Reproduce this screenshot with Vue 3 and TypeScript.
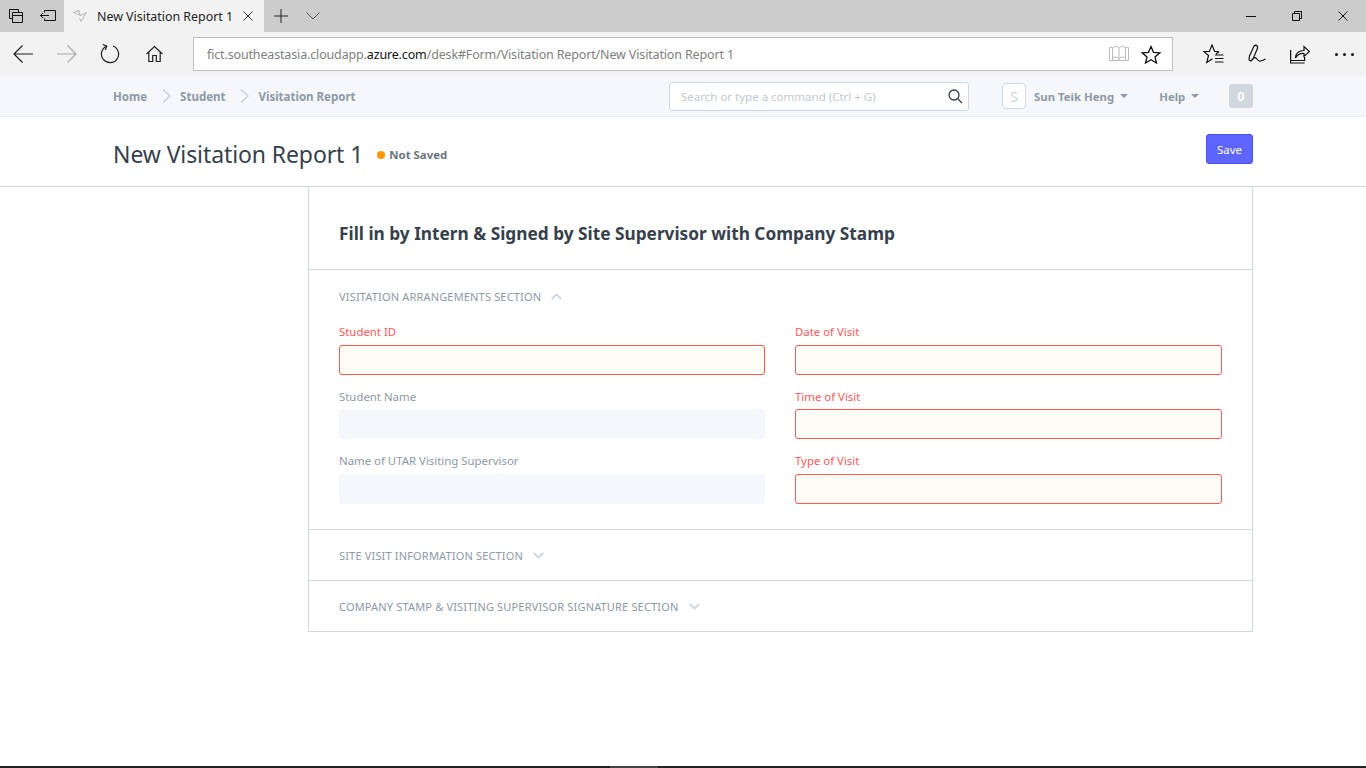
<script setup lang="ts">
const crumbs = ['Home', 'Student', 'Visitation Report']

const leftFields = [
  { label: 'Student ID', required: true },
  { label: 'Student Name', required: false },
  { label: 'Name of UTAR Visiting Supervisor', required: false },
]
const rightFields = [
  { label: 'Date of Visit', required: true },
  { label: 'Time of Visit', required: true },
  { label: 'Type of Visit', required: true },
]
</script>

<template>
  <div class="window">
    <div class="tabstrip">
      <div class="strip-btn">
        <svg width="16" height="16" viewBox="0 0 16 16" fill="none" stroke="#111"><path d="M1.500 4.500v-3h9v3M1.500 1.500v9h3M4.500 4.500h10v10h-10zM4.500 7.500h10"/></svg>
      </div>
      <div class="strip-btn">
        <svg width="16" height="16" viewBox="0 0 16 16" fill="none" stroke="#111"><path d="M4.500 4.500v-2h11v10h-11v-2M0 7.500h9M3 5l-2.500 2.500L3 10"/></svg>
      </div>
      <div class="tab">
        <svg class="tab-icon" width="14" height="14" viewBox="0 0 14 14" fill="none" stroke="#b5b5b5"><path d="M.5 3.500 5 1.500l2.500 5zM7.500 6.500l6-3-5.500 9-1.500-3.500M5 1.500l2 1"/></svg>
        <span class="tab-title">New Visitation Report 1</span>
        <svg width="10" height="10" viewBox="0 0 10 10" fill="none" stroke="#333"><path d="M.5.5l9 9M9.500.5l-9 9"/></svg>
      </div>
      <div class="strip-plus">
        <svg width="14" height="14" viewBox="0 0 14 14" fill="none" stroke="#222"><path d="M7 0v14M0 7h14"/></svg>
      </div>
      <div class="strip-down">
        <svg width="14" height="8" viewBox="0 0 14 8" fill="none" stroke="#555"><path d="M.5.5 7 7l6.500-6.500"/></svg>
      </div>
      <div class="win-controls">
        <svg width="10" height="10" viewBox="0 0 10 10" fill="none" stroke="#111"><path d="M0 5.500h10"/></svg>
        <svg width="10" height="10" viewBox="0 0 10 10" fill="none" stroke="#111"><path d="M2.500 2v-1.500h7v7h-2M.5 2.500h7v7h-7z"/></svg>
        <svg width="10" height="10" viewBox="0 0 10 10" fill="none" stroke="#111"><path d="M.5.5l9 9M9.500.5l-9 9"/></svg>
      </div>
    </div>

    <div class="toolbar">
      <div class="nav-btns">
        <svg width="20" height="18" viewBox="0 0 20 18" fill="none" stroke="#222" stroke-width="1.200"><path d="M20 9H1M9.500.5 1 9l8.500 8.500"/></svg>
        <svg class="muted" width="20" height="18" viewBox="0 0 20 18" fill="none" stroke="#aaa" stroke-width="1.200"><path d="M0 9h19M10.500.5 19 9l-8.500 8.500"/></svg>
        <svg class="reload" width="20" height="20" viewBox="0 0 20 20" fill="none" stroke="#222" stroke-width="1.200"><path d="M6.500 2.200A8.600 8.600 0 1 0 13 2"/><path d="M2.800.5 6.700 2 5.400 6"/></svg>
        <svg class="home" width="17" height="18" viewBox="0 0 17 18" fill="none" stroke="#222" stroke-width="1.200"><path d="M.5 9 8.500 1.500 16.500 9M2.800 7.200V16.500h3.900V10.500h3.600v6h3.900V7.200"/></svg>
      </div>
      <div class="address">
        <span class="url">fict.southeastasia.cloudapp.<b>azure.com</b>/desk#Form/Visitation Report/New Visitation Report 1</span>
        <svg width="20" height="18" viewBox="0 0 20 18" fill="none" stroke="#bbb"><path d="M.5 2.500h3v13h-3zM16.500 2.500h3v13h-3zM3.500 15.500h13M3.500 2.500q5-2.500 6.500 1 1.500-3.500 6.500-1M10 3.500v12M3.500 12.500q5-1.500 6.500 1.500 1.500-3 6.500-1.500"/></svg>
        <svg width="20" height="19" viewBox="0 0 20 19" fill="none" stroke="#111" stroke-width="1.300"><path d="M10 1.500l2.500 5.800 6.300.5-4.800 4.100 1.500 6.100L10 14.800l-5.500 3.200L6 11.900 1.200 7.800l6.300-.5z"/></svg>
      </div>
      <div class="tools">
        <svg width="21" height="20" viewBox="0 0 21 20" fill="none" stroke="#111" stroke-width="1.200"><path d="M16 7.500h-4.400L9 1 6.400 7.500H.8l4.700 4-1.700 7 5.700-3.700M16 7.500l-3 2.500M12 11h8.500M12 14.500h8.500M12 18h8.500"/></svg>
        <svg class="pen" width="18" height="20" viewBox="0 0 18 20" fill="none" stroke="#111" stroke-width="1.200"><path d="M3 17 1 16l.5-4 4.500-10q1.800-1.500 3.200 0q.8 1.500 0 3L5 15zM3 17q3-5 5.500-2.500 2 3 4 2.500 2.500-.5 5-2"/></svg>
        <svg class="share" width="20" height="19" viewBox="0 0 20 19" fill="none" stroke="#111" stroke-width="1.200"><path d="M.6 5v13h14M.6 15.500h14V12M5.500 13q.5-7.500 8.500-7.500V1.500l5.500 5-5.500 5V8.500Q8.500 8 5.500 13z"/></svg>
        <div class="dots"><i></i><i></i><i></i></div>
      </div>
    </div>

    <header class="navbar">
      <div class="container nav-inner">
        <nav class="crumbs">
          <template v-for="(c, i) in crumbs" :key="c">
            <svg v-if="i > 0" class="crumb-sep" width="9" height="14" viewBox="0 0 9 14" fill="none" stroke="#c5ccd4" stroke-width="1.200"><path d="M1 .5 8 7l-7 6.500"/></svg>
            <a>{{ c }}</a>
          </template>
        </nav>
        <div class="search">
          <span>Search or type a command (Ctrl + G)</span>
          <svg width="15" height="15" viewBox="0 0 15 15" fill="none" stroke="#36414c" stroke-width="1.300"><circle cx="6" cy="6" r="5"/><path d="M9.700 9.700 14 14"/></svg>
        </div>
        <div class="avatar">S</div>
        <a class="nav-link user">Sun Teik Heng<i class="caret"></i></a>
        <a class="nav-link help">Help<i class="caret"></i></a>
        <div class="badge">0</div>
      </div>
    </header>

    <div class="page-head">
      <div class="container head-inner">
        <h1>New Visitation Report 1</h1>
        <span class="dot"></span>
        <span class="status">Not Saved</span>
        <button class="save">Save</button>
      </div>
    </div>

    <main class="page-body">
      <div class="container body-inner">
        <div class="sidebar"></div>
        <section class="form-card">
          <div class="form-heading">Fill in by Intern &amp; Signed by Site Supervisor with Company Stamp</div>

          <div class="section open">
            <div class="section-head">
              VISITATION ARRANGEMENTS SECTION
              <svg width="11" height="7" viewBox="0 0 11 7" fill="none" stroke="#d1d8dd" stroke-width="2"><path d="M.7 6 5.500 1.500 10.300 6"/></svg>
            </div>
            <div class="columns">
              <div class="col">
                <div v-for="f in leftFields" :key="f.label" class="field" :class="{ required: f.required }">
                  <label>{{ f.label }}</label>
                  <div class="control"></div>
                </div>
              </div>
              <div class="col">
                <div v-for="f in rightFields" :key="f.label" class="field" :class="{ required: f.required }">
                  <label>{{ f.label }}</label>
                  <div class="control"></div>
                </div>
              </div>
            </div>
          </div>

          <div class="section collapsed">
            <div class="section-head">
              SITE VISIT INFORMATION SECTION
              <svg width="11" height="7" viewBox="0 0 11 7" fill="none" stroke="#d1d8dd" stroke-width="2"><path d="M.7 1 5.500 5.500 10.300 1"/></svg>
            </div>
          </div>
          <div class="section collapsed">
            <div class="section-head">
              COMPANY STAMP &amp; VISITING SUPERVISOR SIGNATURE SECTION
              <svg width="11" height="7" viewBox="0 0 11 7" fill="none" stroke="#d1d8dd" stroke-width="2"><path d="M.7 1 5.500 5.500 10.300 1"/></svg>
            </div>
          </div>
        </section>
      </div>
    </main>

    <footer class="taskbar"><span class="task-active"></span></footer>
  </div>
</template>

<style>
html, body {
  margin: 0;
  background: #fff;
}
</style>

<style scoped>
.window {
  height: 768px;
  display: flex;
  flex-direction: column;
  overflow: hidden;
  font-family: "Noto Sans", "Open Sans", sans-serif;
  color: #36414c;
}

/* browser chrome */
.tabstrip {
  height: 32px;
  flex: none;
  display: flex;
  align-items: center;
  background: #cccccc;
}
.strip-btn {
  width: 32px;
  height: 32px;
  display: flex;
  align-items: center;
  justify-content: center;
}
.tab {
  width: 200px;
  height: 32px;
  box-sizing: border-box;
  padding: 0 11px 0 9px;
  display: flex;
  align-items: center;
  background: #f2f2f2;
}
.tab-title {
  flex: 1;
  margin-left: 10px;
  font-size: 12.400px;
  color: #222;
  white-space: nowrap;
}
.strip-plus {
  margin-left: 10px;
  display: flex;
}
.strip-down {
  margin-left: 18px;
  display: flex;
}
.win-controls {
  margin-left: auto;
  padding-right: 18px;
  display: flex;
  gap: 36px;
}
.toolbar {
  height: 44px;
  flex: none;
  display: flex;
  align-items: center;
  background: #f2f2f2;
}
.nav-btns {
  width: 193px;
  padding-left: 13px;
  box-sizing: border-box;
  display: flex;
  align-items: center;
}
.nav-btns .muted {
  margin-left: 24px;
}
.nav-btns .reload {
  margin-left: 23px;
}
.nav-btns .home {
  margin-left: 26px;
}
.address {
  width: 980px;
  height: 34px;
  box-sizing: border-box;
  border: 1px solid #bfbfbf;
  background: #fff;
  padding: 0 11px 0 13px;
  display: flex;
  align-items: center;
  gap: 12px;
}
.url {
  flex: 1;
  font-size: 12.500px;
  letter-spacing: -0.15px;
  color: #808080;
  white-space: nowrap;
}
.url b {
  font-weight: 400;
  color: #111;
}
.tools {
  flex: 1;
  padding-left: 30px;
  display: flex;
  align-items: center;
}
.tools .pen {
  margin-left: 24px;
}
.tools .share {
  margin-left: 24px;
}
.dots {
  margin-left: 25px;
  display: flex;
  gap: 5px;
}
.dots i {
  width: 3px;
  height: 3px;
  border-radius: 50%;
  background: #111;
}

/* desk */
.container {
  width: 1140px;
  margin-left: 113px;
}
.navbar {
  height: 41px;
  flex: none;
  box-sizing: border-box;
  background: #f5f7fa;
  border-bottom: 1px solid #e8ebee;
}
.nav-inner {
  height: 40px;
  display: flex;
  align-items: center;
}
.crumbs {
  width: 556px;
  display: flex;
  align-items: center;
  font-size: 11.500px;
  font-weight: 700;
  color: #8d99a6;
}
.crumb-sep {
  margin: 0 9px 0 15px;
}
.search {
  width: 300px;
  height: 29px;
  box-sizing: border-box;
  margin-top: 0;
  padding: 0 5px 0 11px;
  border: 1px solid #d1d8dd;
  border-radius: 3px;
  background: #fff;
  display: flex;
  align-items: center;
  justify-content: space-between;
  font-size: 11.500px;
  color: #c3c9cf;
}
.avatar {
  width: 24px;
  height: 26px;
  box-sizing: border-box;
  margin-left: 33px;
  border: 1px solid #d1d8dd;
  border-radius: 4px;
  background: #fff;
  display: flex;
  align-items: center;
  justify-content: center;
  font-size: 15px;
  color: #d1d8dd;
}
.nav-link {
  font-size: 11.400px;
  font-weight: 700;
  color: #8d99a6;
  display: flex;
  align-items: center;
  white-space: nowrap;
}
.user {
  margin-left: 8px;
}
.help {
  margin-left: 31px;
}
.caret {
  width: 0;
  height: 0;
  margin-left: 6px;
  border-left: 4px solid transparent;
  border-right: 4px solid transparent;
  border-top: 4px solid #8d99a6;
}
.badge {
  width: 24px;
  height: 24px;
  margin-left: auto;
  border-radius: 3px;
  background: #d1d8dd;
  color: #fff;
  font-size: 12px;
  font-weight: 700;
  display: flex;
  align-items: center;
  justify-content: center;
}
.page-head {
  height: 70px;
  flex: none;
  box-sizing: border-box;
  background: #fff;
  border-bottom: 1px solid #d1d8dd;
}
.head-inner {
  height: 69px;
  display: flex;
  align-items: center;
}
h1 {
  margin: 0 0 -5px;
  font-size: 23px;
  letter-spacing: -0.1px;
  font-weight: 400;
  color: #36414c;
  white-space: nowrap;
}
.dot {
  width: 8px;
  height: 8px;
  margin: 7px 4px 0 14px;
  border-radius: 50%;
  background: #ff9800;
}
.status {
  margin-top: 5px;
  font-size: 11.400px;
  font-weight: 700;
  color: #6c7680;
}
.save {
  width: 47px;
  height: 30px;
  margin: -5px 0 0 auto;
  padding: 0;
  border: 1px solid #4c52f0;
  border-radius: 3px;
  background: #5e64ff;
  color: #fff;
  font-family: inherit;
  font-size: 11.500px;
}
.page-body {
  flex: 1;
  min-height: 0;
}
.body-inner {
  display: flex;
}
.sidebar {
  width: 195px;
  flex: none;
}
.form-card {
  flex: 1;
  box-sizing: border-box;
  border: 1px solid #d1d8dd;
  border-top: 0;
}
.form-heading {
  height: 82px;
  box-sizing: border-box;
  padding: 10px 30px 0;
  display: flex;
  align-items: center;
  font-size: 17.250px;
  font-weight: 700;
  color: #36414c;
}
.section {
  border-top: 1px solid #d1d8dd;
  padding: 0 30px;
}
.section-head {
  height: 50px;
  display: flex;
  align-items: center;
  gap: 10px;
  font-size: 11px;
  color: #8d99a6;
  letter-spacing: 0.17px;
  padding-top: 1px;
  box-sizing: border-box;
}
.section.open {
  height: 260px;
  box-sizing: border-box;
}
.section.open .section-head {
  height: 55px;
  padding: 0 0 2px;
}
.columns {
  margin-top: 0.200px;
  display: grid;
  grid-template-columns: 426px 427px;
  column-gap: 30px;
}
.field {
  height: 64.400px;
}
.field label {
  display: block;
  height: 19.800px;
  font-size: 11.400px;
  line-height: 14px;
  color: #8d99a6;
}
.control {
  height: 30px;
  box-sizing: border-box;
  border-radius: 3px;
  background: #f5f7fa;
}
.required label {
  color: #ff5858;
}
.required .control {
  border: 1px solid #ff5858;
  background: #fffdf6;
}
.taskbar {
  height: 2px;
  flex: none;
  background: #222;
  position: relative;
}
.task-active {
  position: absolute;
  left: 610px;
  width: 48px;
  height: 2px;
  background: #444;
}
</style>
